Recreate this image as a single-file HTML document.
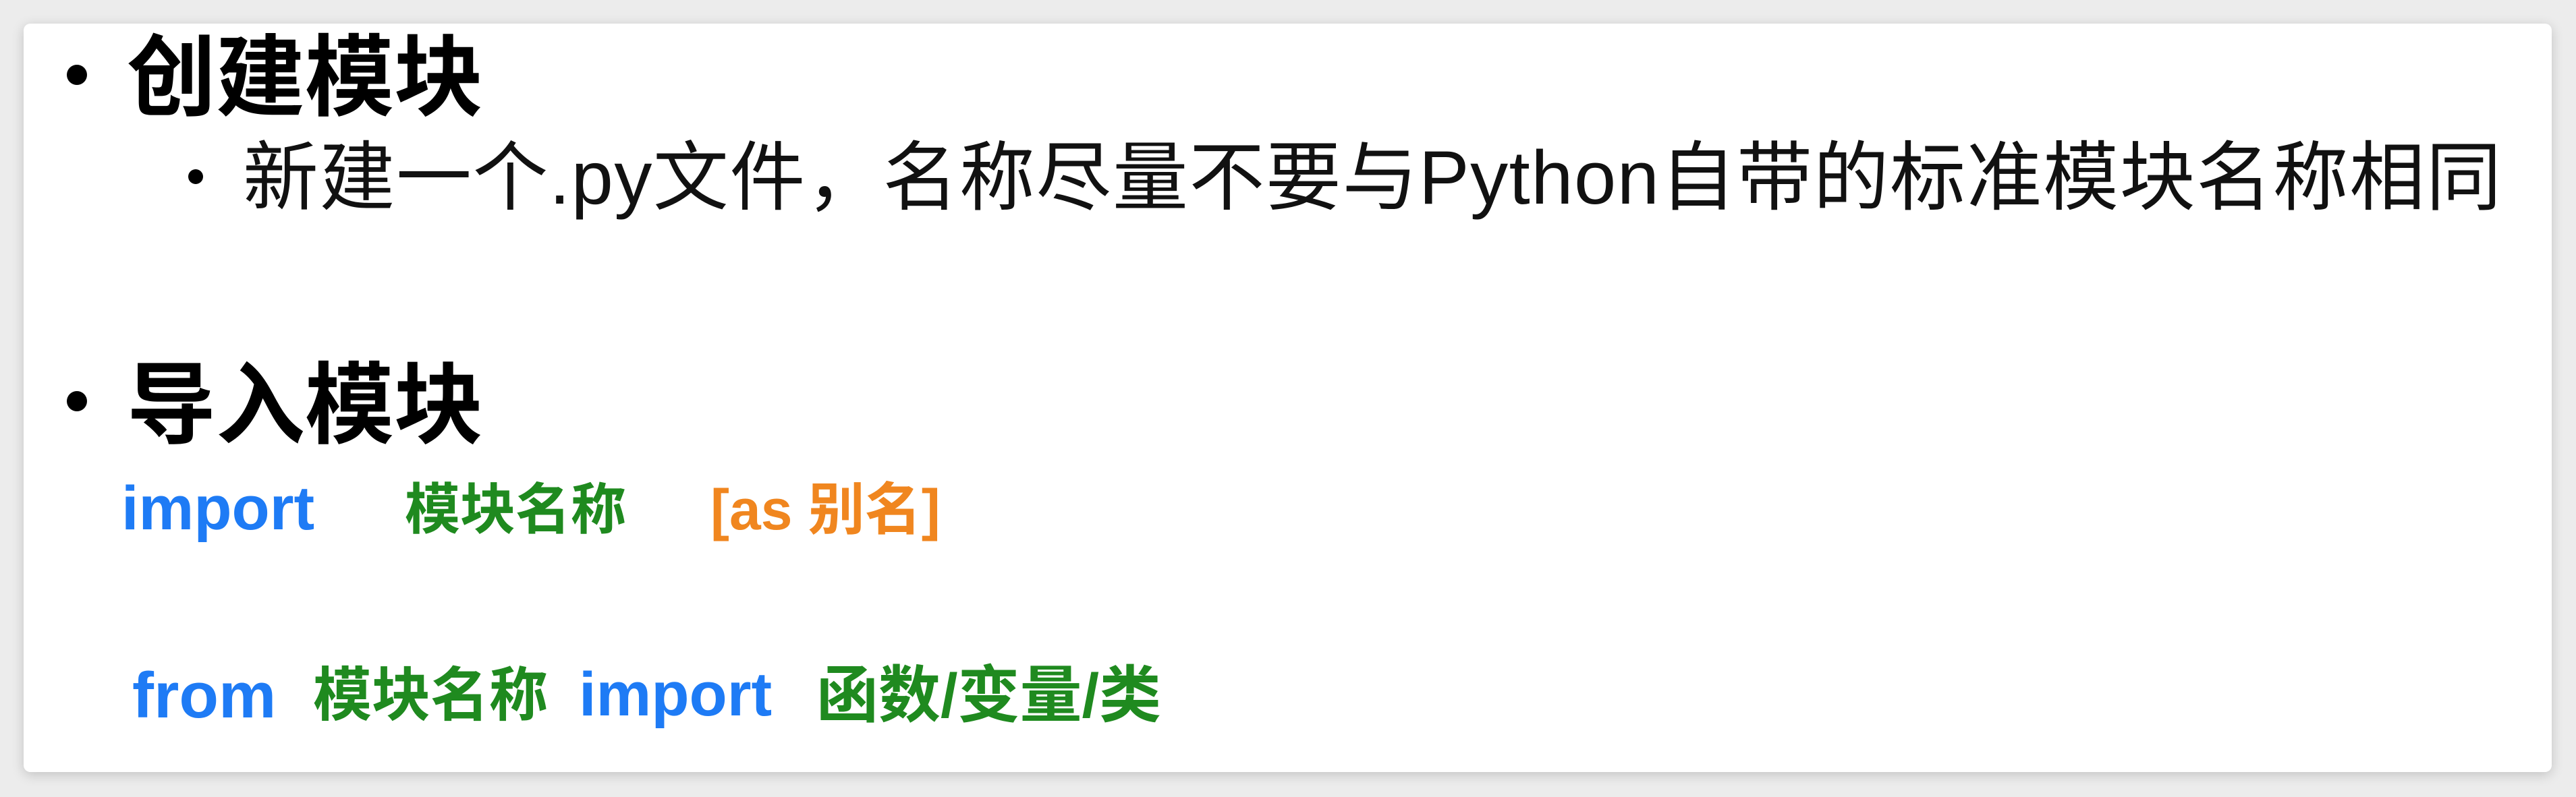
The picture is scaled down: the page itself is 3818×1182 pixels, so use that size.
<!DOCTYPE html>
<html><head><meta charset="utf-8"><style>
html,body{margin:0;padding:0;width:3818px;height:1182px;background:#ececec;overflow:hidden}
.card{position:absolute;left:35px;top:35px;width:3747px;height:1110px;background:#fff;border-radius:10px;box-shadow:0 4px 18px rgba(0,0,0,.18)}
.t{position:absolute;white-space:nowrap;line-height:1;font-family:"Liberation Sans","Noto Sans CJK SC",sans-serif}
.dot{position:absolute;border-radius:50%;background:#000}
.b{font-weight:bold}
.bl{color:#1e7bf5}.gr{color:#1f8a1f}.or{color:#f0861f}
</style></head><body>
<div class="card"></div>
<div class="dot" style="left:99px;top:96px;width:30px;height:30px"></div>
<div class="t b" style="left:188px;top:50px;font-size:132px;color:#000">创建模块</div>
<div class="dot" style="left:279px;top:251px;width:22px;height:22px"></div>
<div class="t" style="left:360px;top:208px;font-size:112px;color:#111;letter-spacing:1.5px">新建一个.py文件，名称尽量不要与Python自带的标准模块名称相同</div>
<div class="dot" style="left:99px;top:580px;width:30px;height:30px"></div>
<div class="t b" style="left:188px;top:536px;font-size:132px;color:#000">导入模块</div>
<div class="t b bl" style="left:180px;top:708px;font-size:92px">import</div>
<div class="t b gr" style="left:600px;top:716px;font-size:82px">模块名称</div>
<div class="t b or" style="left:1053px;top:714px;font-size:84px">[as 别名]</div>
<div class="t b bl" style="left:196px;top:984px;font-size:96px">from</div>
<div class="t b gr" style="left:464px;top:988px;font-size:87px">模块名称</div>
<div class="t b bl" style="left:858px;top:984px;font-size:92px">import</div>
<div class="t b gr" style="left:1210px;top:986px;font-size:92px">函数/变量/类</div>
</body></html>
